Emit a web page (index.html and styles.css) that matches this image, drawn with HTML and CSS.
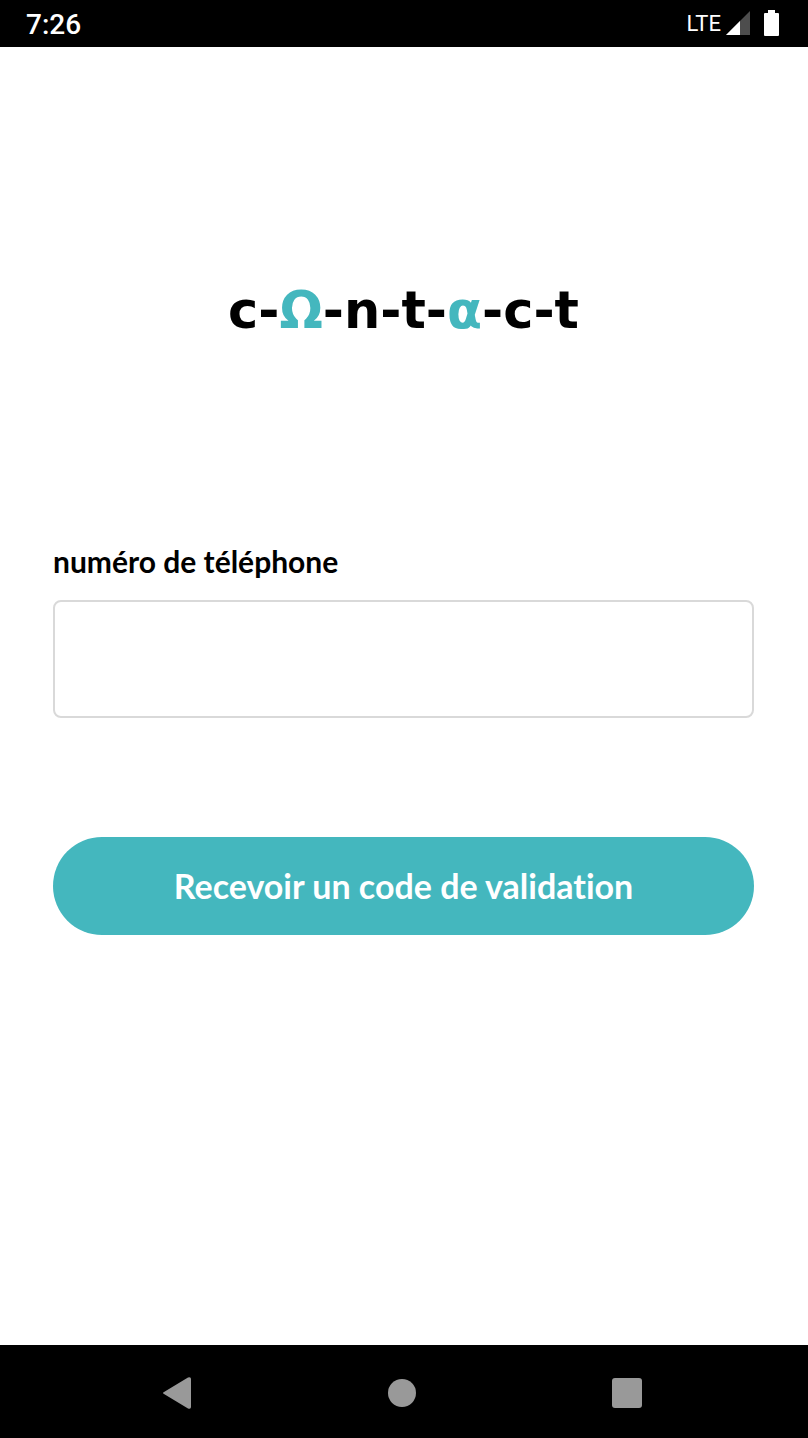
FILE: index.html
```html
<!DOCTYPE html>
<html lang="fr">

<head>
    <meta charset="UTF-8">
    <meta name="viewport" content="width=device-width, initial-scale=1.0">
    <title>c-Ω-n-t-α-c-t</title>
    <link rel="stylesheet" href="styles.css">
</head>

<body>
    <header class="status-bar">
        <span class="clock">7:26</span>
        <div class="status-icons">
            <span class="network">LTE</span>
            <svg class="signal" viewBox="0 0 24 24" aria-hidden="true">
                <path d="M0 24L24 0V24Z" fill="#4d4d4d" />
                <path d="M0 24L14 10V24Z" fill="#fff" />
            </svg>
            <svg class="battery" viewBox="0 0 15 26" aria-hidden="true">
                <path d="M4 0H11V3H14Q15 3 15 4V25Q15 26 14 26H1Q0 26 0 25V4Q0 3 1 3H4Z" fill="#fff" />
            </svg>
        </div>
    </header>

    <main class="container">
        <h1 class="logo">c-<span class="accent">Ω</span>-n-t-<span class="accent">α</span>-c-t</h1>
        <form class="phone-form">
            <label class="label" for="phone">numéro de téléphone</label>
            <input type="tel" class="input" id="phone" name="phone">
            <button type="submit" class="btn">Recevoir un code de validation</button>
        </form>
    </main>

    <nav class="nav-bar">
        <button type="button" class="nav-btn" aria-label="Retour">
            <svg class="nav-icon" viewBox="0 0 32 32" aria-hidden="true">
                <path d="M3 15L27 0.5Q30 -0.5 30 2V30Q30 32.500 27 31.500L3 17Q1 16 3 15Z" fill="#999" />
            </svg>
        </button>
        <button type="button" class="nav-btn" aria-label="Accueil">
            <svg class="nav-icon" viewBox="0 0 32 32" aria-hidden="true">
                <circle cx="16" cy="16" r="14" fill="#999" />
            </svg>
        </button>
        <button type="button" class="nav-btn" aria-label="Applications récentes">
            <svg class="nav-icon" viewBox="0 0 32 32" aria-hidden="true">
                <rect x="1" y="1" width="30" height="30" rx="3" fill="#999" />
            </svg>
        </button>
    </nav>
</body>

</html>
```

FILE: styles.css
```css
* {
    box-sizing: border-box;
}

body {
    font-family: Lato, "Open Sans", sans-serif;
    font-variant-ligatures: none;
    margin: 0;
    min-height: 100vh;
    display: flex;
    flex-direction: column;
    background-color: #fff;
    color: #000;
}

.status-bar {
    display: flex;
    justify-content: space-between;
    align-items: center;
    height: 47px;
    padding: 0 29px 0 26px;
    background-color: #000;
    color: #fff;
    font-family: Roboto, sans-serif;
}

.clock {
    padding-top: 2px;
    font-size: 28px;
    font-weight: 500;
}

.status-icons {
    display: flex;
    align-items: center;
    padding-bottom: 1px;
}

.network {
    font-size: 22px;
    margin-right: 5px;
}

.signal {
    width: 24px;
    height: 24px;
    margin-right: 14px;
}

.battery {
    width: 15px;
    height: 26px;
}

.container {
    flex: 1;
    padding: 232px 54px 0 53px;
}

.logo {
    margin: 0;
    font-family: "DejaVu Sans", sans-serif;
    font-size: 51px;
    font-weight: bold;
    line-height: 64px;
    text-align: center;
}

.accent {
    color: #44b7be;
}

.phone-form {
    display: flex;
    flex-direction: column;
    margin-top: 198px;
}

.label {
    font-size: 30px;
    font-weight: bold;
    line-height: 40px;
}

.input {
    width: 100%;
    height: 118px;
    margin-top: 19px;
    padding: 0 24px;
    border: 2px solid #d9d9d9;
    border-radius: 8px;
    background-color: #fff;
    font-family: inherit;
    font-size: 30px;
}

.btn {
    height: 98px;
    margin-top: 119px;
    padding: 0 24px 2px;
    border: none;
    border-radius: 49px;
    background-color: #44b7be;
    color: #fff;
    font-family: inherit;
    font-variant-ligatures: inherit;
    font-size: 34px;
    font-weight: bold;
    cursor: pointer;
}

.nav-bar {
    display: flex;
    justify-content: space-around;
    align-items: center;
    height: 93px;
    padding: 2px 69px 0 65px;
    background-color: #000;
}

.nav-btn {
    display: flex;
    padding: 0;
    border: none;
    background: none;
    cursor: pointer;
}

.nav-icon {
    width: 32px;
    height: 32px;
}
```
